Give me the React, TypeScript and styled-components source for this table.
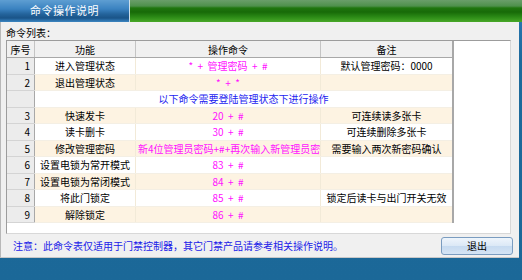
import React from "react";
import styled, { createGlobalStyle } from "styled-components";

const GlobalStyle = createGlobalStyle`
  html, body {
    margin: 0;
    padding: 0;
    background: #1b6898;
  }
  body {
    font-family: "Noto Sans CJK SC", "Liberation Sans", sans-serif;
    font-size: 10px;
  }
`;

const Window = styled.div`
  width: 522px;
  height: 280px;
  display: flex;
  flex-direction: column;
  background: linear-gradient(#2c7bb8 0, #1d6a9c 60px, #1b6898 100%);
  overflow: hidden;
`;

const TitleBar = styled.div`
  height: 22px;
  display: flex;
`;

const Tab = styled.div`
  width: 130px;
  display: flex;
  align-items: center;
  justify-content: center;
  color: #fff;
  font-size: 11px;
  letter-spacing: 0.5px;
  padding-bottom: 2px;
  box-sizing: border-box;
  background: linear-gradient(#5e9ed2 0, #3a82c0 9px, #24649c 14px, #1a5488 18px, #2a6ea8 20px, #3d86c0 22px);
  border-right: 1px solid #cfe0ea;
`;

const GreenBand = styled.div`
  flex: 1;
  background: linear-gradient(#6a9e6a 0, #4e904c 6px, #1f760f 8px, #176a08 12px, #2b8a16 17px, #48a828 22px);
`;

const Body = styled.div`
  height: 236px;
  margin-right: 3px;
  background: #f0f0f0;
  border-left: 1px solid #b8b8b8;
  border-bottom: 1px solid #c8c8c8;
  box-sizing: border-box;
  display: flex;
  flex-direction: column;
  padding: 3px 0 0 5px;
`;

const Caption = styled.div`
  height: 15px;
  line-height: 15px;
  color: #000;
`;

const ListBox = styled.div`
  width: 505px;
  height: 194px;
  box-sizing: border-box;
  background: #fff;
  border-top: 1px solid #9c9c9c;
  border-left: 1px solid #9c9c9c;
  border-right: 1px solid #d8d8d8;
  border-bottom: 1px solid #d8d8d8;
`;

const Grid = styled.table`
  width: 444px;
  border-collapse: collapse;
  table-layout: fixed;
  border-right: 2px solid #a8a8a8;
  border-bottom: 1px solid #a8a8a8;
`;

const HeadCell = styled.th<{ $w: number }>`
  width: ${(p) => p.$w}px;
  height: 16px;
  padding: 0;
  font-weight: normal;
  color: #000;
  background: #f0f0f0;
  border-right: 1px solid #c4c4c4;
  border-bottom: 1px solid #a8a8a8;
  text-align: center;
`;

const Row = styled.tr<{ $cream?: boolean }>`
  height: 16.5px;
  background: ${(p) => (p.$cream ? "#fdf3e2" : "#ffffff")};
`;

const SeqCell = styled.td`
  padding: 0 4px 0 0;
  text-align: right;
  background: #ececec;
  color: #000;
  border-right: 1px solid #a8a8a8;
  border-bottom: 1px solid #d4d4d4;
  border-top: 1px solid #fafafa;
`;

const Cell = styled.td<{ $tone?: "cmd" | "info" }>`
  padding: 0 2px;
  text-align: center;
  white-space: nowrap;
  overflow: hidden;
  color: ${(p) => (p.$tone === "cmd" ? "#ff10ff" : p.$tone === "info" ? "#1c1cf0" : "#000")};
  border-right: 1px solid #f2ead8;
  border-bottom: 1px solid #f4efe4;
`;

const ClipCell = styled(Cell)`
  text-align: left;
  text-overflow: clip;
`;

const Footer = styled.div`
  flex: 1;
  display: flex;
  align-items: center;
  justify-content: space-between;
  padding: 0 6px 0 7px;
`;

const Note = styled.span`
  color: #2020e8;
`;

const ExitButton = styled.button`
  width: 72px;
  height: 18px;
  padding: 0;
  font-family: inherit;
  font-size: 10px;
  color: #000;
  border: 1px solid #7a9cc0;
  border-radius: 3px;
  background: linear-gradient(#eef5fc 0, #dbe8f6 50%, #c6daf0 51%, #d4e4f4 100%);
`;

type Cmd = {
  seq: string;
  func: string;
  cmd: string;
  note: string;
};

const rows: Cmd[] = [
  { seq: "1", func: "进入管理状态", cmd: "*  +  管理密码  +  #", note: "默认管理密码：0000" },
  { seq: "2", func: "退出管理状态", cmd: "*  +  *", note: "" },
];

const rowsAfter: Cmd[] = [
  { seq: "3", func: "快速发卡", cmd: "20  +  #", note: "可连续读多张卡" },
  { seq: "4", func: "读卡删卡", cmd: "30  +  #", note: "可连续删除多张卡" },
  { seq: "5", func: "修改管理密码", cmd: "新4位管理员密码+#+再次输入新管理员密码+#", note: "需要输入两次新密码确认" },
  { seq: "6", func: "设置电锁为常开模式", cmd: "83  +  #", note: "" },
  { seq: "7", func: "设置电锁为常闭模式", cmd: "84  +  #", note: "" },
  { seq: "8", func: "将此门锁定", cmd: "85  +  #", note: "锁定后读卡与出门开关无效" },
  { seq: "9", func: "解除锁定", cmd: "86  +  #", note: "" },
];

const CommandRow = ({ row, cream }: { row: Cmd; cream: boolean }) => (
  <Row $cream={cream}>
    <SeqCell>{row.seq}</SeqCell>
    <Cell>{row.func}</Cell>
    {row.seq === "5" ? (
      <ClipCell $tone="cmd">{row.cmd}</ClipCell>
    ) : (
      <Cell $tone="cmd" style={{ whiteSpace: "pre" }}>{row.cmd}</Cell>
    )}
    <Cell>{row.note}</Cell>
  </Row>
);

const App = () => {
  return (
    <Window>
      <GlobalStyle />
      <TitleBar>
        <Tab>命令操作说明</Tab>
        <GreenBand />
      </TitleBar>
      <Body>
        <Caption>命令列表：</Caption>
        <ListBox>
          <Grid>
            <thead>
              <tr>
                <HeadCell $w={27}>序号</HeadCell>
                <HeadCell $w={100}>功能</HeadCell>
                <HeadCell $w={184}>操作命令</HeadCell>
                <HeadCell $w={131}>备注</HeadCell>
              </tr>
            </thead>
            <tbody>
              {rows.map((r, i) => (
                <CommandRow key={r.seq} row={r} cream={i % 2 === 1} />
              ))}
              <Row>
                <SeqCell />
                <Cell $tone="info" colSpan={3}>
                  以下命令需要登陆管理状态下进行操作
                </Cell>
              </Row>
              {rowsAfter.map((r, i) => (
                <CommandRow key={r.seq} row={r} cream={i % 2 === 0} />
              ))}
            </tbody>
          </Grid>
        </ListBox>
        <Footer>
          <Note>注意：此命令表仅适用于门禁控制器，其它门禁产品请参考相关操作说明。</Note>
          <ExitButton>退出</ExitButton>
        </Footer>
      </Body>
    </Window>
  );
};

export default App;
